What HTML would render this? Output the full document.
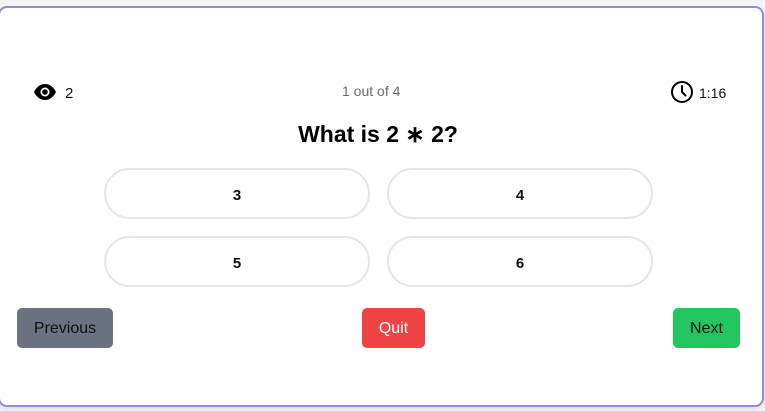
<!DOCTYPE html>
<html><head><style>
html,body{margin:0;padding:0;width:765px;height:411px;background:#f3f4f6;overflow:hidden;font-family:"Liberation Sans",sans-serif}
.card{position:absolute;left:-2px;top:6px;width:762px;height:397px;background:#fff;border:2px solid #9c86d9;border-radius:9px;box-shadow:0 2px 4px rgba(0,0,0,.1)}
.abs{position:absolute}
.ans{position:absolute;width:262px;height:47px;padding-top:3px;border:2px solid #e5e5e5;border-radius:26px;box-sizing:content-box;display:flex;align-items:center;justify-content:center;font-weight:bold;font-size:15px;color:#111}
.btn{position:absolute;top:308px;height:40px;padding-top:2px;box-sizing:border-box;border-radius:5px;display:flex;align-items:center;justify-content:center;font-size:16px}
</style></head><body>
<div class="card"></div>
<svg class="abs" style="left:33px;top:83px" width="24" height="18" viewBox="0 0 24 18"><path d="M1 9C4 3 8 1 12 1s8 2 11 8c-3 6-7 8-11 8S4 15 1 9z" fill="#000"/><circle cx="12" cy="9" r="4.5" fill="#fff"/><circle cx="12" cy="9" r="2.8" fill="#000"/></svg>
<div class="abs" style="left:65px;top:85px;font-size:15px;color:#111">2</div>
<div class="abs" style="left:342px;top:83px;font-size:14px;color:#6b6b6b">1 out of 4</div>
<svg class="abs" style="left:670px;top:80px" width="24" height="24" viewBox="0 0 24 24"><circle cx="12" cy="12" r="10" fill="none" stroke="#000" stroke-width="2"/><path d="M12 6v6l3.5 3.5" fill="none" stroke="#000" stroke-width="2" stroke-linecap="round"/></svg>
<div class="abs" style="left:699px;top:85px;font-size:14px;color:#111">1:16</div>
<div class="abs" style="left:0;width:756px;text-align:center;top:121px;font-size:23px;font-weight:bold;color:#000">What is 2 ∗ 2?</div>
<div class="ans" style="left:104px;top:168px;height:44px">3</div>
<div class="ans" style="left:387px;top:168px;height:44px">4</div>
<div class="ans" style="left:104px;top:236px;height:44px">5</div>
<div class="ans" style="left:387px;top:236px;height:44px">6</div>
<div class="btn" style="left:17px;width:96px;background:#6b7280;color:#111">Previous</div>
<div class="btn" style="left:362px;width:63px;background:#ef4444;color:#fff">Quit</div>
<div class="btn" style="left:673px;width:67px;background:#22c55e;color:#111">Next</div>
</body></html>
